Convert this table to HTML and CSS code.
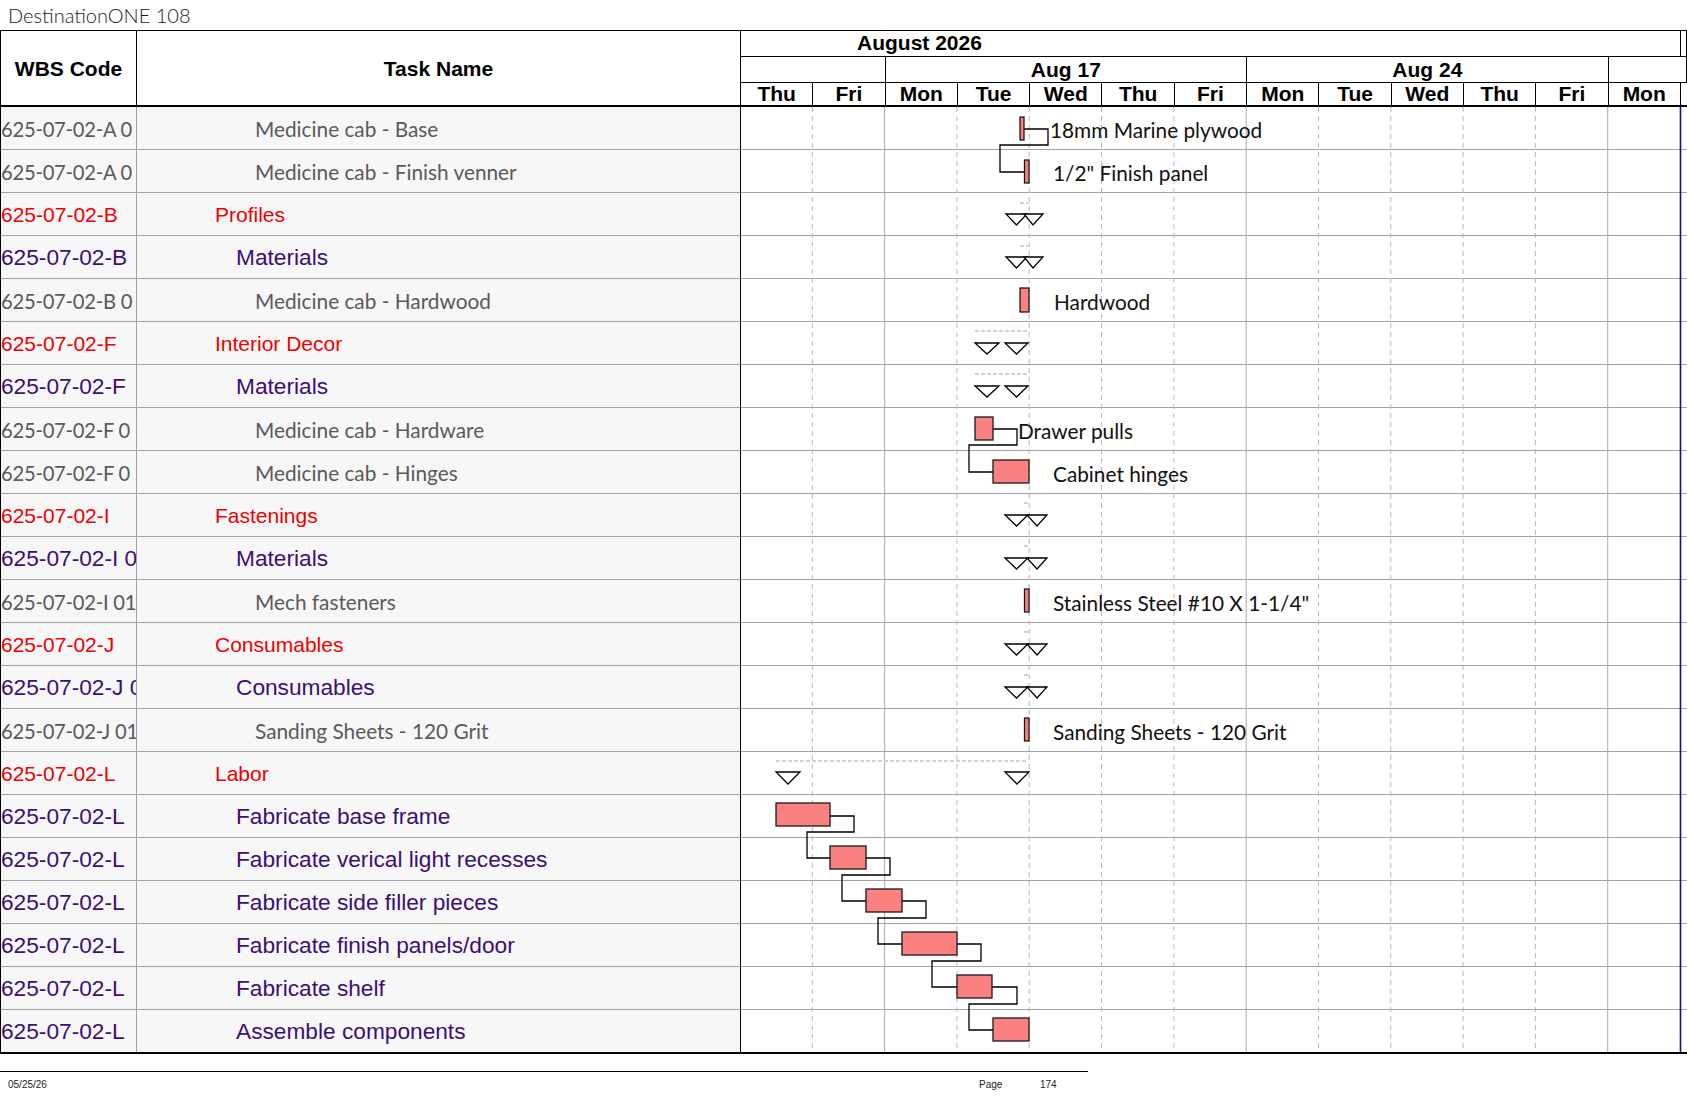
FILE: index.html
```html
<!DOCTYPE html>
<html lang="en">
<head>
<meta charset="utf-8">
<title>DestinationONE 108</title>
<link rel="stylesheet" href="styles.css">
</head>
<body>
<div class="page">
  <div class="title">DestinationONE 108</div>
  <div class="chart">
    <div class="table">
      <div class="thead">
        <div class="th th-wbs">WBS Code</div>
        <div class="th th-name">Task Name</div>
      </div>
      <div class="row l3"><div class="wbs">625-07-02-A 0</div><div class="name">Medicine cab - Base</div></div>
      <div class="row l3"><div class="wbs">625-07-02-A 0</div><div class="name">Medicine cab - Finish venner</div></div>
      <div class="row l1"><div class="wbs">625-07-02-B</div><div class="name">Profiles</div></div>
      <div class="row l2"><div class="wbs">625-07-02-B</div><div class="name">Materials</div></div>
      <div class="row l3"><div class="wbs">625-07-02-B 0</div><div class="name">Medicine cab - Hardwood</div></div>
      <div class="row l1"><div class="wbs">625-07-02-F</div><div class="name">Interior Decor</div></div>
      <div class="row l2"><div class="wbs">625-07-02-F</div><div class="name">Materials</div></div>
      <div class="row l3"><div class="wbs">625-07-02-F 0</div><div class="name">Medicine cab - Hardware</div></div>
      <div class="row l3"><div class="wbs">625-07-02-F 0</div><div class="name">Medicine cab - Hinges</div></div>
      <div class="row l1"><div class="wbs">625-07-02-I</div><div class="name">Fastenings</div></div>
      <div class="row l2"><div class="wbs">625-07-02-I 0</div><div class="name">Materials</div></div>
      <div class="row l3"><div class="wbs">625-07-02-I 01</div><div class="name">Mech fasteners</div></div>
      <div class="row l1"><div class="wbs">625-07-02-J</div><div class="name">Consumables</div></div>
      <div class="row l2"><div class="wbs">625-07-02-J 0</div><div class="name">Consumables</div></div>
      <div class="row l3"><div class="wbs">625-07-02-J 01</div><div class="name">Sanding Sheets - 120 Grit</div></div>
      <div class="row l1"><div class="wbs">625-07-02-L</div><div class="name">Labor</div></div>
      <div class="row l2"><div class="wbs">625-07-02-L</div><div class="name">Fabricate base frame</div></div>
      <div class="row l2"><div class="wbs">625-07-02-L</div><div class="name">Fabricate verical light recesses</div></div>
      <div class="row l2"><div class="wbs">625-07-02-L</div><div class="name">Fabricate side filler pieces</div></div>
      <div class="row l2"><div class="wbs">625-07-02-L</div><div class="name">Fabricate finish panels/door</div></div>
      <div class="row l2"><div class="wbs">625-07-02-L</div><div class="name">Fabricate shelf</div></div>
      <div class="row l2 last"><div class="wbs">625-07-02-L</div><div class="name">Assemble components</div></div>
    </div>

    <div class="gantt">
      <div class="ghead">
        <div class="hrow months">
          <div class="cell month">August 2026</div>
          <div class="cell rest"></div>
        </div>
        <div class="hrow weeks">
          <div class="cell w2"></div>
          <div class="cell w5">Aug 17</div>
          <div class="cell w5">Aug 24</div>
          <div class="cell wlast"></div>
        </div>
        <div class="hrow days">
          <div class="cell day">Thu</div>
          <div class="cell day">Fri</div>
          <div class="cell day">Mon</div>
          <div class="cell day">Tue</div>
          <div class="cell day">Wed</div>
          <div class="cell day">Thu</div>
          <div class="cell day">Fri</div>
          <div class="cell day">Mon</div>
          <div class="cell day">Tue</div>
          <div class="cell day">Wed</div>
          <div class="cell day">Thu</div>
          <div class="cell day">Fri</div>
          <div class="cell day">Mon</div>
          <div class="cell drest"></div>
        </div>
      </div>
      <div class="gbody">
        <div class="grow"></div><div class="grow"></div><div class="grow"></div><div class="grow"></div>
        <div class="grow"></div><div class="grow"></div><div class="grow"></div><div class="grow"></div>
        <div class="grow"></div><div class="grow"></div><div class="grow"></div><div class="grow"></div>
        <div class="grow"></div><div class="grow"></div><div class="grow"></div><div class="grow"></div>
        <div class="grow"></div><div class="grow"></div><div class="grow"></div><div class="grow"></div>
        <div class="grow"></div><div class="grow last"></div>

        <svg class="overlay" width="946" height="945" viewBox="741 107 946 945" xmlns="http://www.w3.org/2000/svg">
          <g class="vdash">
            <line x1="812.3" y1="107" x2="812.3" y2="1052"/>
            <line x1="956.9" y1="107" x2="956.9" y2="1052"/>
            <line x1="1029.2" y1="107" x2="1029.2" y2="1052"/>
            <line x1="1101.6" y1="107" x2="1101.6" y2="1052"/>
            <line x1="1173.9" y1="107" x2="1173.9" y2="1052"/>
            <line x1="1318.5" y1="107" x2="1318.5" y2="1052"/>
            <line x1="1390.8" y1="107" x2="1390.8" y2="1052"/>
            <line x1="1463.1" y1="107" x2="1463.1" y2="1052"/>
            <line x1="1535.4" y1="107" x2="1535.4" y2="1052"/>
          </g>
          <g class="vsolid">
            <line x1="884.6" y1="107" x2="884.6" y2="1052"/>
            <line x1="1246.2" y1="107" x2="1246.2" y2="1052"/>
            <line x1="1607.7" y1="107" x2="1607.7" y2="1052"/>
          </g>
          <line class="vblue" x1="1680.5" y1="107" x2="1680.5" y2="1052"/>

          <g class="sumline">
            <line x1="1020" y1="203" x2="1029" y2="203"/>
            <line x1="1020" y1="246" x2="1029" y2="246"/>
            <line x1="975" y1="331" x2="1029" y2="331"/>
            <line x1="975" y1="374" x2="1029" y2="374"/>
            <line x1="1024" y1="503" x2="1029" y2="503"/>
            <line x1="1024" y1="546" x2="1029" y2="546"/>
            <line x1="1024" y1="632" x2="1029" y2="632"/>
            <line x1="1024" y1="675" x2="1029" y2="675"/>
            <line x1="776" y1="761" x2="1028" y2="761"/>
          </g>

          <g class="tri">
            <path d="M1006 214 H1027 L1016.5 225 Z"/>
            <path d="M1024 214 H1043 L1033 225 Z"/>
            <path d="M1006 257 H1027 L1016.5 268 Z"/>
            <path d="M1024 257 H1043 L1033 268 Z"/>
            <path d="M975 343 H999 L987 354 Z"/>
            <path d="M1005 343 H1028 L1016.5 354 Z"/>
            <path d="M975 386 H999 L987 397 Z"/>
            <path d="M1005 386 H1028 L1016.5 397 Z"/>
            <path d="M1005 515 H1028 L1016.5 526 Z"/>
            <path d="M1027 515 H1047 L1037 526 Z"/>
            <path d="M1005 558 H1028 L1016.5 569 Z"/>
            <path d="M1027 558 H1047 L1037 569 Z"/>
            <path d="M1005 644 H1028 L1016.5 655 Z"/>
            <path d="M1027 644 H1047 L1037 655 Z"/>
            <path d="M1005 687 H1028 L1016.5 698 Z"/>
            <path d="M1027 687 H1047 L1037 698 Z"/>
            <path d="M776 772 H800 L788 784 Z"/>
            <path d="M1005 772 H1029 L1017 784 Z"/>
          </g>

          <g class="link">
            <path d="M1024 129 H1048 V145 H1000 V172 H1024"/>
            <path d="M993 429 H1017 V445 H969 V472 H993"/>
            <path d="M830 816 H854 V832 H807 V858 H830"/>
            <path d="M866 858 H890 V875 H842 V901 H866"/>
            <path d="M902 901 H926 V918 H878 V944 H902"/>
            <path d="M957 944 H981 V961 H932 V987 H957"/>
            <path d="M992 987 H1017 V1004 H969 V1030 H993"/>
          </g>

          <g class="bar">
            <rect x="1020" y="117" width="4" height="23"/>
            <rect x="1024.5" y="160" width="4.5" height="23"/>
            <rect x="1020" y="288" width="9" height="24"/>
            <rect x="975" y="417" width="18" height="23"/>
            <rect x="993" y="460" width="36" height="23"/>
            <rect x="1024.5" y="589" width="4.5" height="23"/>
            <rect x="1024.5" y="718" width="4.5" height="23"/>
            <rect x="776" y="803" width="54" height="23"/>
            <rect x="830" y="846" width="36" height="23"/>
            <rect x="866" y="889" width="36" height="23"/>
            <rect x="902" y="932" width="55" height="23"/>
            <rect x="957" y="975" width="35" height="23"/>
            <rect x="993" y="1018" width="36" height="23"/>
          </g>

          <g class="label">
            <text x="1050" y="137.5">18mm Marine plywood</text>
            <text x="1053" y="180.5">1/2" Finish panel</text>
            <text x="1054" y="309.5">Hardwood</text>
            <text x="1018" y="438.5">Drawer pulls</text>
            <text x="1053" y="481.5">Cabinet hinges</text>
            <text x="1053" y="610.5">Stainless Steel #10 X 1-1/4"</text>
            <text x="1053" y="739.5">Sanding Sheets - 120 Grit</text>
          </g>
        </svg>
      </div>
    </div>
  </div>
  <div class="footer">
    <span class="f-date">05/25/26</span>
    <span class="f-page">Page</span>
    <span class="f-num">174</span>
  </div>
</div>
</body>
</html>
```

FILE: styles.css
```css
* { box-sizing: border-box; }

body {
  margin: 0;
  background: #ffffff;
}

.page {
  width: 1687px;
  height: 1097px;
  overflow: hidden;
  background: #ffffff;
}

.title {
  height: 30px;
  padding-left: 8px;
  font-family: Lato, "Liberation Sans", sans-serif;
  font-weight: 300;
  font-size: 20px;
  line-height: 30px;
  color: #1a1a1a;
}

.chart {
  display: flex;
  border-top: 1px solid #000;
  border-bottom: 2px solid #000;
}

/* ---------- left table ---------- */
.table {
  width: 740px;
  flex: none;
  border-left: 1px solid #000;
}

.thead {
  display: flex;
  height: 76px;
  border-bottom: 2px solid #000;
  background: #fff;
}

.th {
  display: flex;
  align-items: center;
  justify-content: center;
  padding-top: 2px;
  font-family: "Liberation Sans", Arial, sans-serif;
  font-weight: bold;
  font-size: 21px;
  color: #000;
}

.th-wbs {
  width: 136px;
  border-right: 1px solid #000;
}

.th-name {
  flex: 1;
}

.row {
  display: flex;
  height: 43px;
  border-bottom: 1px solid #a3a3a3;
  background: #f7f7f7;
}

.row.last {
  height: 42px;
  border-bottom: none;
}

.wbs {
  width: 136px;
  flex: none;
  border-right: 1px solid #a3a3a3;
  white-space: nowrap;
  overflow: hidden;
  display: flex;
  align-items: center;
  padding-top: 1px;
}

.name {
  flex: 1;
  white-space: nowrap;
  overflow: hidden;
  display: flex;
  align-items: center;
  padding-top: 1px;
}

.l1 .wbs, .l1 .name {
  font-family: "Liberation Sans", Arial, sans-serif;
  font-size: 21px;
  color: #f00000;
}
.l1 .name { padding-left: 78px; }

.l2 .wbs, .l2 .name {
  font-family: "Liberation Sans", Arial, sans-serif;
  font-size: 22.7px;
  color: #3a0f78;
}
.l2 .name { padding-left: 99px; }

.l3 .wbs, .l3 .name {
  font-family: Lato, "Open Sans", sans-serif;
  font-size: 20.8px;
  color: #5a5a5a;
}
.l3 .wbs {
  font-size: 20.2px;
  letter-spacing: -0.25px;
}
.l3 .name { padding-left: 118px; }

/* ---------- gantt ---------- */
.gantt {
  flex: 1;
  border-left: 1px solid #000;
}

.ghead {
  height: 76px;
  border-bottom: 2px solid #000;
  font-family: "Liberation Sans", Arial, sans-serif;
  font-weight: bold;
  font-size: 21px;
  color: #000;
}

.hrow {
  display: grid;
  grid-template-columns: repeat(13, 72.31px) 1fr;
}

.months, .weeks {
  height: 26px;
  border-bottom: 1px solid #000;
}

.days {
  height: 22px;
}

.cell {
  line-height: 25px;
  white-space: nowrap;
  overflow: hidden;
}

.month {
  grid-column: span 13;
  border-right: 1px solid #000;
  padding-left: 116px;
  line-height: 23px;
}

.rest {
  border-right: 1px solid #000;
}

.w2 { grid-column: span 2; border-right: 1px solid #000; }
.w5 { grid-column: span 5; border-right: 1px solid #000; text-align: center; }
.wlast { grid-column: span 2; border-right: 1px solid #000; }

.day {
  border-right: 1px solid #000;
  text-align: center;
  line-height: 22px;
}

.gbody {
  position: relative;
  background: #fff;
}

.grow {
  height: 43px;
  border-bottom: 1px solid #a3a3a3;
}

.grow.last {
  height: 42px;
  border-bottom: none;
}

.overlay {
  position: absolute;
  left: 0;
  top: 0;
  display: block;
}

.vdash line {
  stroke: #b8b8b8;
  stroke-width: 1;
  stroke-dasharray: 5 4;
}

.vsolid line {
  stroke: #ababab;
  stroke-width: 1;
}

.vblue {
  stroke: #10108a;
  stroke-width: 1.6;
}

.sumline line {
  stroke: #d2d2d2;
  stroke-width: 2;
  stroke-dasharray: 4 2;
}

.tri path {
  fill: #ffffff;
  stroke: #000;
  stroke-width: 1.3;
  stroke-linejoin: miter;
}

.link path {
  fill: none;
  stroke: #000;
  stroke-width: 1.3;
}

.bar rect {
  fill: #fb8080;
  stroke: #1a1a1a;
  stroke-width: 1.3;
}

.label text {
  font-family: Lato, "Open Sans", sans-serif;
  font-size: 20.8px;
  fill: #111;
}

/* ---------- footer ---------- */
.footer {
  width: 1088px;
  margin-top: 17px;
  border-top: 1px solid #000;
  display: flex;
  padding-left: 8px;
  padding-top: 7px;
  font-family: "Liberation Sans", Arial, sans-serif;
  font-size: 10px;
  line-height: 12px;
  color: #222;
}

.f-date { flex: 1; }
.f-page { width: 61px; }
.f-num { width: 48px; }
```
